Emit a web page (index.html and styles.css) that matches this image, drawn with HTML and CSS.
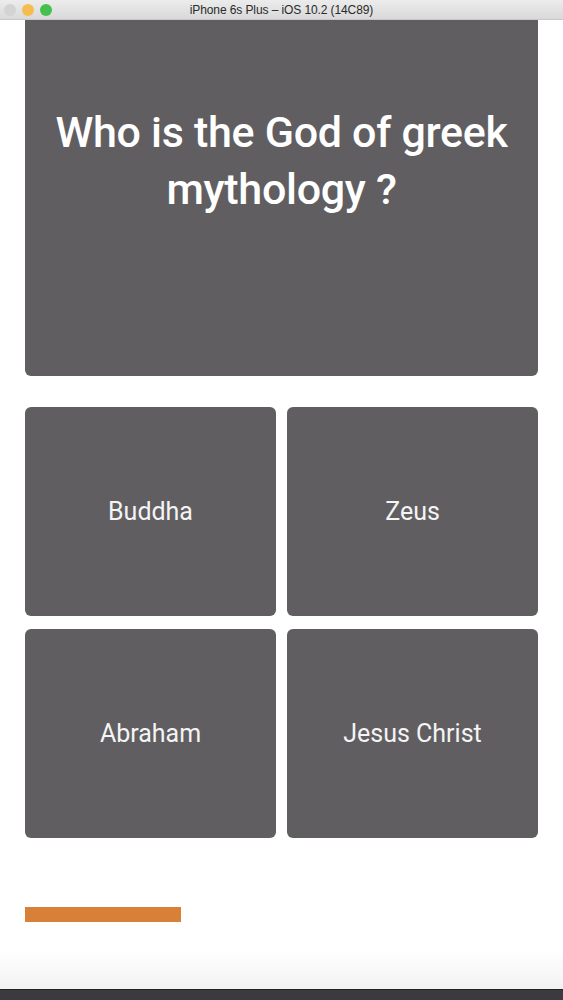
FILE: index.html
```html
<!DOCTYPE html>
<html>
<head>
<meta charset="utf-8">
<link rel="stylesheet" href="styles.css">
</head>
<body>
<div class="window">
  <div class="titlebar">
    <div class="lights">
      <span class="light off"></span>
      <span class="light yellow"></span>
      <span class="light green"></span>
    </div>
    <div class="title">iPhone 6s Plus – iOS 10.2 (14C89)</div>
  </div>
  <main class="screen">
    <div class="question">Who is the God of greek mythology ?</div>
    <div class="answers">
      <div class="answer">Buddha</div>
      <div class="answer">Zeus</div>
      <div class="answer">Abraham</div>
      <div class="answer">Jesus Christ</div>
    </div>
    <div class="timer"><div class="timer-fill" style="width:156px"></div></div>
  </main>
  <div class="dock"></div>
</div>
</body>
</html>
```
FILE: styles.css
```css
html, body {
  margin: 0;
  padding: 0;
  background: #ffffff;
}
.window {
  width: 563px;
  height: 1000px;
  display: flex;
  flex-direction: column;
  overflow: hidden;
  font-family: Roboto, "Liberation Sans", sans-serif;
}
.titlebar {
  height: 20px;
  flex: 0 0 20px;
  background: linear-gradient(#ececec, #d9d9d9);
  border-bottom: 1px solid #c8c8c8;
  box-sizing: border-box;
  position: relative;
  display: flex;
  align-items: center;
  justify-content: center;
}
.lights {
  position: absolute;
  left: 4px;
  top: 4px;
  display: flex;
  gap: 6px;
}
.light {
  width: 12px;
  height: 12px;
  border-radius: 50%;
  display: block;
}
.light.off { background: #d3d3d3; }
.light.yellow { background: #f5bd4f; }
.light.green { background: #44c04f; }
.title {
  font-family: "Liberation Sans", Roboto, sans-serif;
  font-size: 12px;
  color: #2a2a2a;
  letter-spacing: -0.1px;
}
.screen {
  flex: 1;
  padding: 0 25px;
  display: flex;
  flex-direction: column;
  background: linear-gradient(#ffffff 0, #ffffff 930px, #f2f2f2 969px);
}
.question {
  height: 356px;
  background: #605e61;
  border-radius: 0 0 6px 6px;
  color: #ffffff;
  font-size: 43px;
  font-weight: 500;
  line-height: 57px;
  text-align: center;
  padding: 84px 10px 0;
  box-sizing: border-box;
  letter-spacing: -0.3px;
}
.answers {
  margin-top: 31px;
  display: grid;
  grid-template-columns: 1fr 1fr;
  grid-auto-rows: 209px;
  column-gap: 11px;
  row-gap: 13px;
}
.answer {
  background: #605e61;
  border-radius: 6px;
  color: #f4f4f4;
  font-size: 25px;
  font-weight: 400;
  display: flex;
  align-items: center;
  justify-content: center;
}
.timer {
  margin-top: 69px;
  height: 15px;
}
.timer-fill {
  height: 15px;
  background: #d98038;
}
.dock {
  flex: 0 0 10px;
  background: #3b3a3f;
  border-top: 1px solid #222;
}
```
